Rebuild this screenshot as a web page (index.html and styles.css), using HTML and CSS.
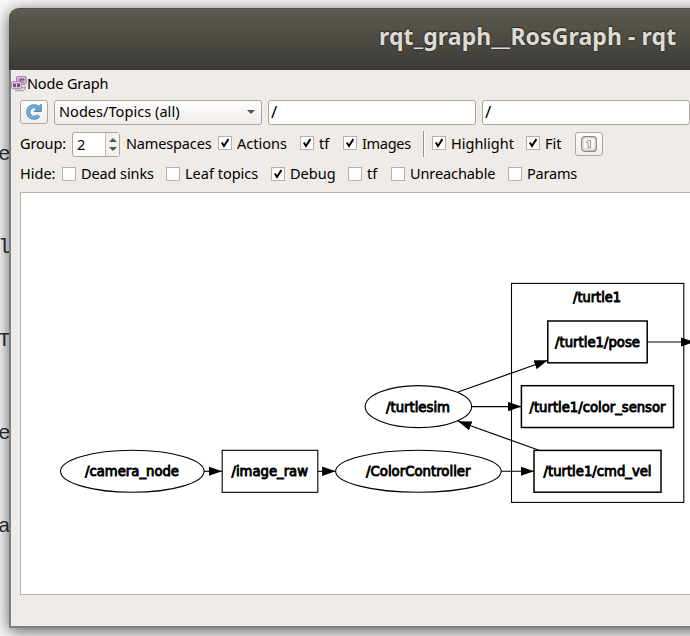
FILE: index.html
```html
<!DOCTYPE html>
<html lang="en">
<head>
<meta charset="utf-8">
<title>rqt_graph__RosGraph - rqt</title>
<link rel="stylesheet" href="styles.css">
</head>
<body>
<div class="desktop">
  <aside class="backdrop"><span>e</span><span>l</span><span>T</span><span>e</span><span>a</span></aside>
  <main class="window">
    <header class="titlebar"><h1>rqt_graph__RosGraph - rqt</h1></header>
    <section class="content">
      <div class="dock-title">
        <svg width="16" height="16" viewBox="0 0 16 16">
          <path d="M4 14.5h7M10 12l4-1v2l-3 2" fill="none" stroke="#aaa7a5" stroke-width="1.5"/>
          <rect x="5.5" y=".7" width="9.5" height="7.5" rx="1" fill="#e6dce6" stroke="#81758a"/>
          <rect x="7" y="2.3" width="6.5" height="4.3" fill="#97509a"/>
          <path d="M8 2v4M10 5h4" stroke="#dfbfe0"/>
          <rect x=".7" y="5.7" width="9.5" height="7" rx="1" fill="#eee4ed" stroke="#94869a"/>
          <rect x="2" y="7.2" width="7" height="4" fill="#963f98"/>
          <path d="M3 7h4M5.5 8v3" stroke="#e5c7e5"/>
        </svg><span class="t-node">Node Graph</span>
      </div>
      <div class="row filters">
        <button class="tool">
          <svg width="18" height="18" viewBox="0 0 18 18">
            <path d="M13.6 12.5A5.8 5.8 0 1 1 12.8 4.6" fill="none" stroke="#4b86c2" stroke-width="4"/>
            <path d="M16.3 1.2v7.3H9l2.4-2.4 2.7-2.7z" fill="#6ba3d5" stroke="#4b86c2"/>
            <path d="M13.3 12.2A5.6 5.6 0 1 1 12.7 5" fill="none" stroke="#79add9" stroke-width="2.4"/>
          </svg>
        </button>
        <div class="combo"><span class="t-combo">Nodes/Topics (all)</span><i class="arrow"></i></div>
        <div class="field">/</div>
        <div class="field">/</div>
      </div>
      <div class="row group">
        <span class="label t-group">Group:</span>
        <div class="spin"><span>2</span><div class="steps"><i class="arrow up"></i><i class="arrow"></i></div></div>
        <span class="label t-names">Namespaces</span>
        <label class="check w-actions"><i class="box"><svg viewBox="0 0 14 14"><path d="M3.3 6.5 5.8 10.5 11 2.5"/></svg></i><span class="t-actions">Actions</span></label>
        <label class="check w-tf"><i class="box"><svg viewBox="0 0 14 14"><path d="M3.3 6.5 5.8 10.5 11 2.5"/></svg></i><span>tf</span></label>
        <label class="check w-images"><i class="box"><svg viewBox="0 0 14 14"><path d="M3.3 6.5 5.8 10.5 11 2.5"/></svg></i><span class="t-images">Images</span></label>
        <i class="separator"></i>
        <label class="check w-highlight"><i class="box"><svg viewBox="0 0 14 14"><path d="M3.3 6.5 5.8 10.5 11 2.5"/></svg></i><span class="t-highlight">Highlight</span></label>
        <label class="check w-fit"><i class="box"><svg viewBox="0 0 14 14"><path d="M3.3 6.5 5.8 10.5 11 2.5"/></svg></i><span>Fit</span></label>
        <button class="tool">
          <svg width="16" height="16" viewBox="0 0 16 16" fill="none">
            <rect x=".7" y=".7" width="14.6" height="14.6" rx="3" fill="#eee" stroke="#858585" stroke-width="1.2"/>
            <rect x="2" y="2" width="12" height="11" rx="2" fill="#fafafa" stroke="#d0d0d0"/>
            <path d="M5.5 5.5 7 4.5h2.5v7H7v-5H5.5z" fill="#fff" stroke="#909090"/>
          </svg>
        </button>
      </div>
      <div class="row hide">
        <span class="label t-hide">Hide:</span>
        <label class="check w-dead"><i class="box"></i><span class="t-dead">Dead sinks</span></label>
        <label class="check w-leaf"><i class="box"></i><span class="t-leaf">Leaf topics</span></label>
        <label class="check w-debug"><i class="box"><svg viewBox="0 0 14 14"><path d="M3.3 6.5 5.8 10.5 11 2.5"/></svg></i><span class="t-debug">Debug</span></label>
        <label class="check w-tf"><i class="box"></i><span>tf</span></label>
        <label class="check w-unreach"><i class="box"></i><span class="t-unreach">Unreachable</span></label>
        <label class="check"><i class="box"></i><span class="t-params">Params</span></label>
      </div>
      <div class="view">
        <svg class="graph" width="669" height="401" viewBox="21 193 669 401">
          <defs><marker id="tip" markerUnits="userSpaceOnUse" markerWidth="15" markerHeight="10" refX="13.5" refY="5" orient="auto"><path d="M0 .3 13.5 5 0 9.7z"/></marker></defs>
          <g class="shape">
            <rect x="511.5" y="283.4" width="172.3" height="219"/>
            <ellipse cx="132.3" cy="471.3" rx="71.8" ry="21"/>
            <ellipse cx="418.4" cy="406.6" rx="53.2" ry="21"/>
            <ellipse cx="418.4" cy="471.3" rx="82.8" ry="21"/>
            <rect x="222.2" y="450.3" width="95.6" height="42"/>
          </g>
          <g class="shape topic">
            <rect x="547.8" y="321" width="99.4" height="41.8"/>
            <rect x="521.4" y="385.7" width="152.1" height="41.8"/>
            <rect x="534" y="450.4" width="127" height="41.8"/>
          </g>
          <g class="edge">
            <path d="M204 471.3H222"/><path d="M318 471.3H335.6"/><path d="M501.2 471.3H534"/>
            <path d="M471.6 406.6H521.4"/><path d="M458 392 547.8 360.2"/><path d="M539 450.3 458 421.3"/><path d="M647.5 342H694"/>
          </g>
          <g class="names">
            <text x="85" y="476.3" textLength="94" lengthAdjust="spacingAndGlyphs">/camera_node</text>
            <text x="231.5" y="476.3" textLength="76.5" lengthAdjust="spacingAndGlyphs">/image_raw</text>
            <text x="366" y="476.3" textLength="104.5" lengthAdjust="spacingAndGlyphs">/ColorController</text>
            <text x="386" y="411.8" textLength="64" lengthAdjust="spacingAndGlyphs">/turtlesim</text>
            <text x="573" y="302.2" textLength="48" lengthAdjust="spacingAndGlyphs">/turtle1</text>
            <text x="555" y="347.2" textLength="85" lengthAdjust="spacingAndGlyphs">/turtle1/pose</text>
            <text x="529.5" y="411.8" textLength="136" lengthAdjust="spacingAndGlyphs">/turtle1/color_sensor</text>
            <text x="543.5" y="476.3" textLength="108" lengthAdjust="spacingAndGlyphs">/turtle1/cmd_vel</text>
          </g>
        </svg>
      </div>
    </section>
  </main>
</div>
</body>
</html>
```
FILE: styles.css
```css
* { box-sizing: border-box; }
body { margin: 0; width: 690px; height: 636px; overflow: hidden; background: #f8f8f8; font: 14.5px/20px "Noto Sans", sans-serif; color: #000; }
i { font-style: normal; }
.desktop { display: grid; grid-template-columns: 9px 720px; width: 690px; height: 636px; overflow: hidden; }
.backdrop { display: flex; flex-direction: column; overflow: hidden; padding-top: 108px; font: 21px/93px "Liberation Mono", monospace; color: #2c2f33; }
.backdrop span { height: 93px; flex: none; width: 12px; margin-left: -2px; }
.window { display: flex; flex-direction: column; margin-top: 8px; height: 620px; border: solid #7f7f7d; border-width: 0 0 2px; border-radius: 10px 0 0 0; box-shadow: 0 3px 16px rgba(0,0,0,.65); }
.titlebar { height: 62px; flex: none; padding: 11px 0 0 370px; border-radius: 10px 0 0 0; border-top: 1px solid #4c4a43; background: linear-gradient(#5d5a4f, #3c3b37); box-shadow: inset 0 1px #66635a; }
h1 { margin: 0; font: bold 23px/32px "Noto Sans", sans-serif; color: #dfdbd2; letter-spacing: .1px; text-shadow: 0 0 2px #222, 0 -1px 1px #333; white-space: nowrap; }
.content { flex: 1; display: flex; flex-direction: column; border-left: 2px solid #7f7f7d; background: #efebe7; }
.dock-title { display: flex; align-items: center; height: 26px; flex: none; }
.dock-title span { margin-top: -1px; letter-spacing: -.15px; }
.dock-title svg { margin-top: 1px; }
.row { display: flex; align-items: center; flex: none; padding-left: 9px; white-space: nowrap; }
.row span { position: relative; top: -1px; }
.filters { gap: 6px; height: 32px; }
.tool { display: flex; align-items: center; justify-content: center; flex: none; width: 28px; height: 24px; padding: 0; border: 1px solid #aaa6a2; border-radius: 3px; background: linear-gradient(#fdfdfd, #eeedec); }
.combo, .field { display: flex; align-items: center; width: 208px; height: 25px; flex: none; border: 1px solid #aaa6a2; border-radius: 3px; }
.combo { justify-content: space-between; padding: 0 6px 0 4px; background: linear-gradient(#fdfdfd, #eeedec); }
.t-combo { letter-spacing: .05px; }
.field { padding-left: 2px; background: #fff; font-size: 17px; }
.arrow { width: 0; height: 0; border: 4px solid transparent; border-top-color: #55524f; border-bottom: 0; }
.arrow.up { border: 4px solid transparent; border-bottom-color: #55524f; border-top: 0; }
.group { height: 30px; margin-top: 1px; }
.label { flex: none; }
.t-group { width: 52px; letter-spacing: -.15px; }
.t-names { width: 92px; letter-spacing: -.15px; }
.t-hide { width: 42px; }
.spin { display: flex; width: 48px; height: 25px; margin-right: 6px; padding-left: 4px; justify-content: space-between; align-items: center; border: 1px solid #aaa6a2; border-radius: 3px; background: #fff; flex: none; }
.spin span { top: 0; }
.steps { display: flex; flex-direction: column; align-items: center; justify-content: space-evenly; width: 14px; height: 23px; background: #f3f1ef; border-left: 1px solid #c0bcb8; }
.check { display: flex; align-items: center; gap: 5px; flex: none; }
.group .box { position: relative; top: -1px; }
.box { width: 14px; height: 14px; flex: none; border: 1px solid #b5b1ad; background: #fff; }
.box svg { display: block; width: 12px; height: 12px; fill: none; stroke: #000; stroke-width: 2.3; }
.w-actions { width: 82px; }
.w-tf { width: 43px; }
.w-images { width: 80px; }
.t-images { letter-spacing: -.3px; }
.separator { width: 2px; height: 26px; margin-right: 7px; border-left: 1px solid #999692; border-right: 1px solid #fff; }
.w-highlight { width: 94px; }
.w-fit { width: 49px; }
.hide { height: 30px; }
.w-dead { width: 104px; }
.t-dead { letter-spacing: -.1px; }
.w-leaf { width: 105px; }
.w-debug { width: 77px; }
.w-unreach { width: 117px; }
.t-unreach { letter-spacing: -.1px; }
.t-params { letter-spacing: -.2px; }
.view { height: 403px; margin: 3px 0 0 9px; flex: none; border: 1px solid #b5b1ad; background: #fff; }
.graph { display: block; }
.shape { fill: none; stroke: #000; stroke-width: 1.1; }
.topic { stroke-width: 1.5; }
.edge path { fill: none; stroke: #000; stroke-width: 1.1; marker-end: url(#tip); }
.names { font: 13.8px "DejaVu Sans", sans-serif; fill: #000; stroke: #000; stroke-width: .9; }
```
